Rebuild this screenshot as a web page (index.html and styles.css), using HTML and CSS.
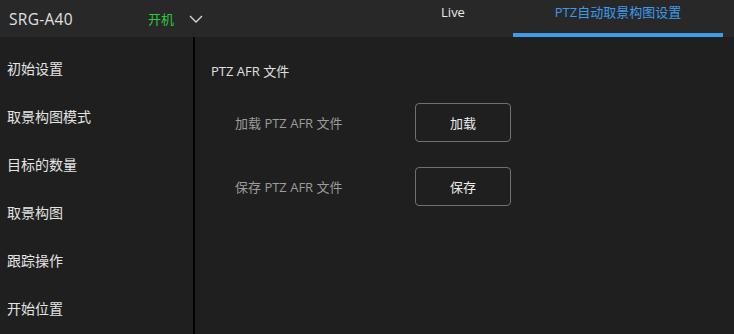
FILE: index.html
```html
<!DOCTYPE html>
<html lang="zh">
<head>
<meta charset="utf-8">
<link rel="stylesheet" href="styles.css">
</head>
<body>
<header class="top">
  <div class="brand">SRG-A40</div>
  <div class="power">开机</div>
  <svg class="chev" width="14" height="8" viewBox="0 0 14 8"><path d="M1 1 L7 7 L13 1" fill="none" stroke="#d8d8d8" stroke-width="1.3"/></svg>
  <nav class="tabs">
    <div class="tab">Live</div>
    <div class="tab active">PTZ自动取景构图设置</div>
  </nav>
</header>
<div class="main">
  <aside class="side">
    <div class="item">初始设置</div>
    <div class="item">取景构图模式</div>
    <div class="item">目标的数量</div>
    <div class="item">取景构图</div>
    <div class="item">跟踪操作</div>
    <div class="item">开始位置</div>
  </aside>
  <section class="content">
    <div class="title">PTZ AFR 文件</div>
    <div class="row">
      <div class="label">加载 PTZ AFR 文件</div>
      <button class="btn">加载</button>
    </div>
    <div class="row">
      <div class="label">保存 PTZ AFR 文件</div>
      <button class="btn">保存</button>
    </div>
  </section>
</div>
</body>
</html>
```
FILE: styles.css
```css
* { box-sizing: border-box; }
html, body { margin: 0; padding: 0; }
body {
  width: 734px;
  height: 334px;
  overflow: hidden;
  background: #1f1f1f;
  font-family: "Open Sans", "Noto Sans CJK SC", sans-serif;
  color: #dcdcdc;
}
.top {
  height: 37px;
  background: #282828;
  display: flex;
  align-items: center;
}
.brand {
  padding-left: 9px;
  width: 148px;
  font-size: 15.5px;
  letter-spacing: 0.3px;
  color: #e0e0e0;
}
.power {
  font-size: 13px;
  color: #2fc53f;
  width: 42px;
}
.chev { margin-top: 1px; margin-left: -1px; }
.tabs {
  margin-left: auto;
  margin-right: 11px;
  display: flex;
  height: 37px;
  align-self: flex-start;
}
.tab {
  height: 37px;
  display: flex;
  align-items: flex-start;
  justify-content: center;
  font-size: 13px;
  line-height: 18px;
  padding-top: 3px;
  color: #e8e8e8;
  width: 120px;
  border-bottom: 4px solid transparent;
}
.tab.active {
  width: 210px;
  color: #3d9be9;
  border-bottom-color: #3d9be9;
}
.main {
  display: flex;
  height: 297px;
}
.side {
  width: 195px;
  border-right: 2px solid #000;
  padding-top: 7px;
}
.item {
  height: 48px;
  display: flex;
  align-items: center;
  padding-left: 7px;
  font-size: 14px;
  color: #e4e4e4;
}
.content {
  flex: 1;
  padding: 24px 0 0 16px;
}
.title {
  font-size: 13px;
  line-height: 20px;
  color: #e0e0e0;
  margin-bottom: 22px;
}
.row {
  display: flex;
  align-items: center;
  margin-bottom: 25px;
  padding-left: 24px;
}
.label {
  width: 180px;
  font-size: 13px;
  color: #9c9c9c;
}
.btn {
  width: 96px;
  height: 39px;
  background: transparent;
  border: 1px solid #707070;
  border-radius: 4px;
  color: #ececec;
  font-family: inherit;
  font-size: 13px;
  padding: 0;
}
```
